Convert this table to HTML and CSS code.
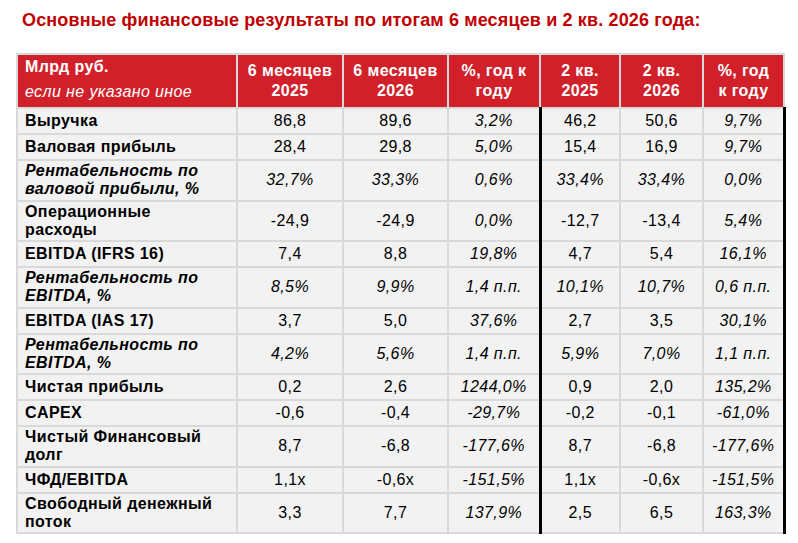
FILE: index.html
```html
<!DOCTYPE html>
<html lang="ru">
<head>
<meta charset="utf-8">
<link rel="stylesheet" href="styles.css">
</head>
<body>
<div class="page">
  <h1 class="title">Основные финансовые результаты по итогам 6 месяцев и 2 кв. 2026 года:</h1>
  <table class="fin">
    <colgroup>
      <col class="c1"><col class="c2"><col class="c3"><col class="c4"><col class="c5"><col class="c6"><col class="c7">
    </colgroup>
    <thead>
      <tr>
        <th class="lbl"><span class="unit">Млрд руб.</span><span class="note">если не указано иное</span></th>
        <th>6 месяцев<br>2025</th>
        <th>6 месяцев<br>2026</th>
        <th>%, год к<br>году</th>
        <th>2 кв.<br>2025</th>
        <th>2 кв.<br>2026</th>
        <th>%, год<br>к году</th>
      </tr>
    </thead>
    <tbody>
      <tr><td class="name">Выручка</td><td>86,8</td><td>89,6</td><td class="it">3,2%</td><td class="q">46,2</td><td>50,6</td><td class="it last">9,7%</td></tr>
      <tr><td class="name">Валовая прибыль</td><td>28,4</td><td>29,8</td><td class="it">5,0%</td><td class="q">15,4</td><td>16,9</td><td class="it last">9,7%</td></tr>
      <tr class="ital tall"><td class="name">Рентабельность по<br>валовой прибыли, %</td><td>32,7%</td><td>33,3%</td><td>0,6%</td><td class="q">33,4%</td><td>33,4%</td><td class="last">0,0%</td></tr>
      <tr class="tall"><td class="name">Операционные<br>расходы</td><td>-24,9</td><td>-24,9</td><td class="it">0,0%</td><td class="q">-12,7</td><td>-13,4</td><td class="it last">5,4%</td></tr>
      <tr><td class="name">EBITDA (IFRS 16)</td><td>7,4</td><td>8,8</td><td class="it">19,8%</td><td class="q">4,7</td><td>5,4</td><td class="it last">16,1%</td></tr>
      <tr class="ital tall"><td class="name">Рентабельность по<br>EBITDA, %</td><td>8,5%</td><td>9,9%</td><td>1,4 п.п.</td><td class="q">10,1%</td><td>10,7%</td><td class="last">0,6 п.п.</td></tr>
      <tr><td class="name">EBITDA (IAS 17)</td><td>3,7</td><td>5,0</td><td class="it">37,6%</td><td class="q">2,7</td><td>3,5</td><td class="it last">30,1%</td></tr>
      <tr class="ital tall"><td class="name">Рентабельность по<br>EBITDA, %</td><td>4,2%</td><td>5,6%</td><td>1,4 п.п.</td><td class="q">5,9%</td><td>7,0%</td><td class="last">1,1 п.п.</td></tr>
      <tr><td class="name">Чистая прибыль</td><td>0,2</td><td>2,6</td><td class="it">1244,0%</td><td class="q">0,9</td><td>2,0</td><td class="it last">135,2%</td></tr>
      <tr><td class="name">CAPEX</td><td>-0,6</td><td>-0,4</td><td class="it">-29,7%</td><td class="q">-0,2</td><td>-0,1</td><td class="it last">-61,0%</td></tr>
      <tr class="tall"><td class="name">Чистый Финансовый<br>долг</td><td>8,7</td><td>-6,8</td><td class="it">-177,6%</td><td class="q">8,7</td><td>-6,8</td><td class="it last">-177,6%</td></tr>
      <tr><td class="name">ЧФД/EBITDA</td><td>1,1x</td><td>-0,6x</td><td class="it">-151,5%</td><td class="q">1,1x</td><td>-0,6x</td><td class="it last">-151,5%</td></tr>
      <tr class="tall"><td class="name">Свободный денежный<br>поток</td><td>3,3</td><td>7,7</td><td class="it">137,9%</td><td class="q">2,5</td><td>6,5</td><td class="it last">163,3%</td></tr>
    </tbody>
  </table>
</div>
</body>
</html>
```
FILE: styles.css
```css
html, body {
  margin: 0;
  padding: 0;
  background: #ffffff;
}
.page {
  padding: 10px 0 0 16px;
  font-family: "Liberation Sans", Arial, sans-serif;
  color: #000;
}
.title {
  margin: 0 0 23px 6px;
  font-size: 18px;
  letter-spacing: 0.15px;
  line-height: 20px;
  font-weight: bold;
  color: #c00000;
}
.fin {
  border-collapse: collapse;
  table-layout: fixed;
  width: 767px;
  font-size: 16px;
  letter-spacing: 0.4px;
}
.c1 { width: 220px; }
.c2 { width: 106px; }
.c3 { width: 105px; }
.c4 { width: 92px; }
.c5 { width: 80px; }
.c6 { width: 83px; }
.c7 { width: 81px; }
.fin th {
  background: #d2202b;
  color: #ffffff;
  font-weight: bold;
  border: 2px solid #d9d9d9;
  height: 48px;
  padding: 0 2px;
  line-height: 20px;
  text-align: center;
  vertical-align: middle;
}
.fin th.lbl {
  text-align: left;
  padding-left: 7px;
  vertical-align: top;
}
.unit {
  display: block;
  padding-top: 2px;
  line-height: 20px;
}
.note {
  display: block;
  font-weight: normal;
  font-style: italic;
  line-height: 30px;
}
.fin td {
  background: #f2f2f2;
  border: 2px solid #d9d9d9;
  height: 24px;
  padding: 0 2px;
  line-height: 18px;
  text-align: center;
  vertical-align: middle;
}
.fin tr.tall td {
  height: 38.5px;
}
.fin td.name {
  text-align: left;
  font-weight: bold;
  padding-left: 7px;
}
.fin td.it,
.fin tr.ital td {
  font-style: italic;
}
.fin td.q {
  border-left: 3px solid #000;
}
.fin td.last {
  border-right: 3px solid #000;
}
```
